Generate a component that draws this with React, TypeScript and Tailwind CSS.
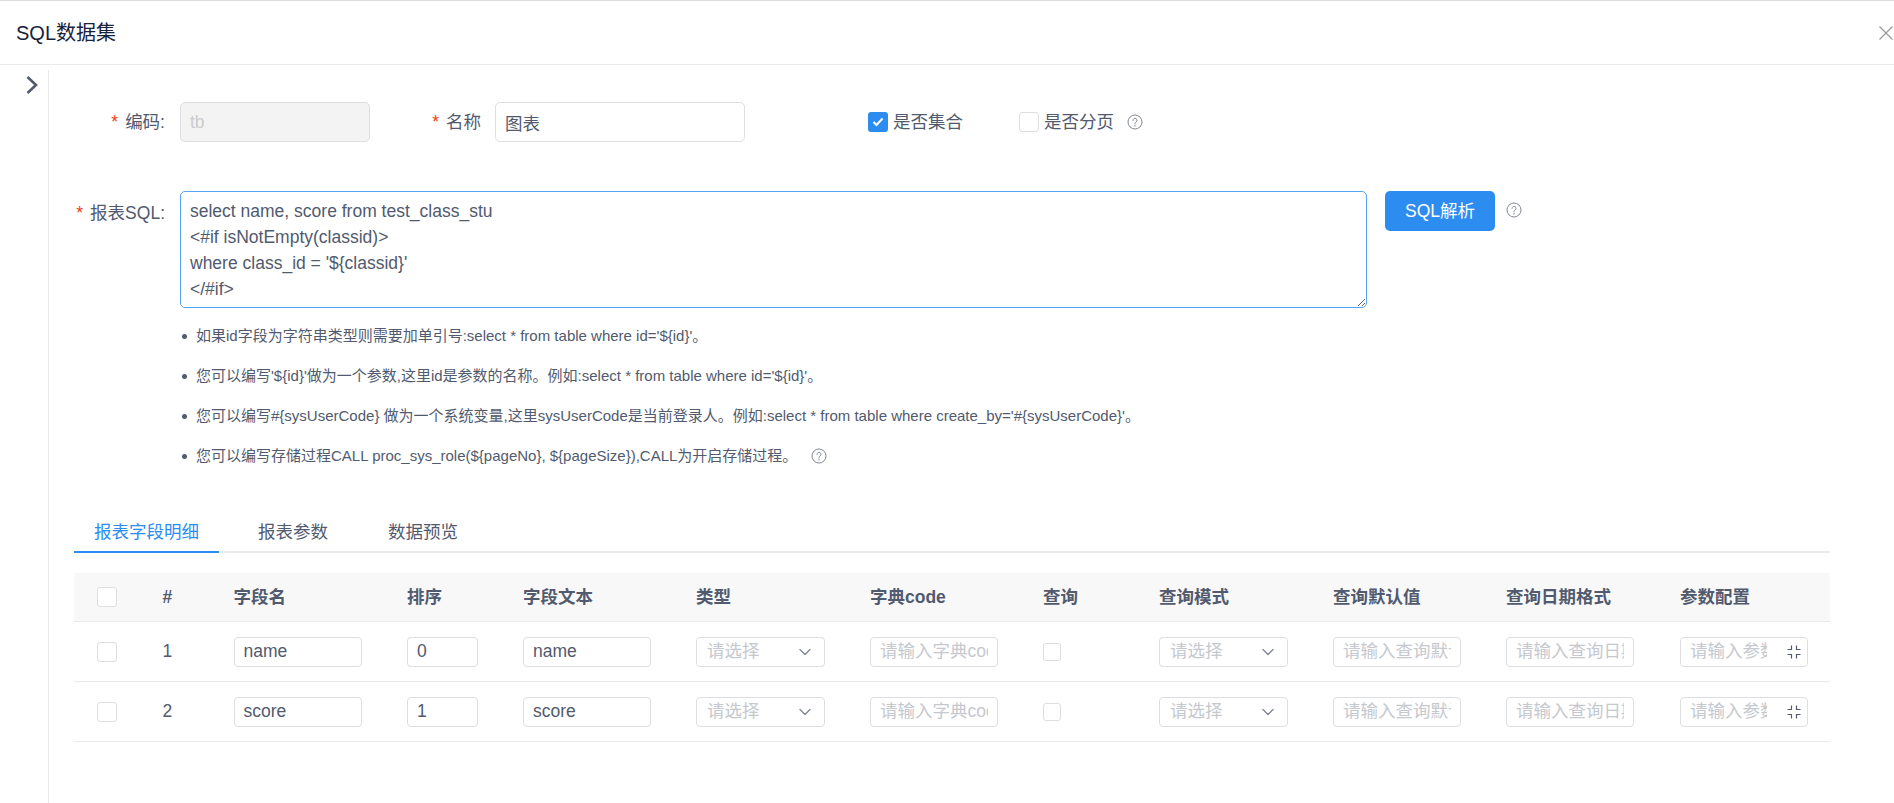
import React from 'react';
import { ChevronDown } from 'lucide-react';

const GRID =
  'grid grid-cols-[88.5px_71px_173.5px_116px_173px_174px_173px_116px_174px_173px_174px_1fr] items-center';

const HEADERS = ['#', '字段名', '排序', '字段文本', '类型', '字典code', '查询', '查询模式', '查询默认值', '查询日期格式', '参数配置'];

const ROWS = [
  { no: 1, name: 'name', order: '0' },
  { no: 2, name: 'score', order: '1' },
];

const NOTES = [
  "如果id字段为字符串类型则需要加单引号:select * from table where id='${id}'。",
  "您可以编写'${id}'做为一个参数,这里id是参数的名称。例如:select * from table where id='${id}'。",
  "您可以编写#{sysUserCode} 做为一个系统变量,这里sysUserCode是当前登录人。例如:select * from table where create_by='#{sysUserCode}'。",
  '您可以编写存储过程CALL proc_sys_role(${pageNo}, ${pageSize}),CALL为开启存储过程。',
];

const SQL = `select name, score from test_class_stu
<#if isNotEmpty(classid)>
where class_id = '\${classid}'
</#if>`;

const cellInput =
  'h-[30px] rounded-[4px] border border-[#dcdee2] bg-white px-[9px] text-[17.5px] text-[#515a6e] outline-none placeholder:text-[#c5c8ce]';

function HelpIcon() {
  return (
    <svg width="16" height="16" viewBox="0 0 16 16" fill="none" stroke="#808695" strokeWidth="1" className="shrink-0">
      <circle cx="8" cy="8" r="7" />
      <path d="M6 6.4a2 2 0 1 1 3.1 1.6c-.7.5-1.1.8-1.1 1.7" strokeLinecap="round" />
      <path d="M8 11.2v.9" strokeLinecap="round" />
    </svg>
  );
}

function CompressIcon() {
  return (
    <svg width="14" height="14" viewBox="0 0 14 14" fill="none" stroke="#515a6e" strokeWidth="1.2">
      <path d="M4.5 0.5v4h-4M9.5 0.5v4h4M4.5 13.5v-4h-4M9.5 13.5v-4h4" />
    </svg>
  );
}

function Box({ size = 'w-5 h-5' }: { size?: string }) {
  return <span className={`${size} block rounded-[3px] border border-[#dcdee2] bg-white`} />;
}

function Required({ children, width }: { children: React.ReactNode; width: string }) {
  return (
    <label className={`${width} flex shrink-0 justify-end text-[17.5px] leading-[26px] text-[#515a6e]`}>
      <span className="mr-[7px] text-[#ed4014]">*</span>
      {children}
    </label>
  );
}

function SelectBox() {
  return (
    <div className="flex h-[30px] w-[129px] items-center justify-between rounded-[4px] border border-[#dcdee2] bg-white pl-[10px] pr-[9px]">
      <span className="text-[17.5px] text-[#c5c8ce]">请选择</span>
      <ChevronDown size={20} color="#808695" strokeWidth={1.6} />
    </div>
  );
}

export default function App() {
  return (
    <div className="flex h-[803px] flex-col overflow-hidden border-t border-[#dddddd] bg-white font-[family-name:'Liberation_Sans','Noto_Sans_CJK_SC',sans-serif]">
      <header className="flex h-[64px] shrink-0 items-center justify-between border-b border-[#e8eaec] pl-4 pr-px">
        <h1 className="text-[20px] leading-none text-[#17233d]">SQL数据集</h1>
        <svg width="14" height="14" viewBox="0 0 14 14" stroke="#999999" strokeWidth="1.2">
          <path d="M0.5 0.5l13 13M13.5 0.5l-13 13" />
        </svg>
      </header>

      <div className="flex flex-1 pt-[5px]">
        <aside className="w-[49px] shrink-0 border-r border-[#e8eaec] pl-[25px] pt-[5px]">
          <svg width="13" height="20" viewBox="0 0 13 20" fill="none" stroke="#515a6e" strokeWidth="2.6">
            <path d="M2.5 2l8.5 8-8.5 8" />
          </svg>
        </aside>

        <main className="min-w-0 flex-1 pt-[32px]">
          <div className="flex h-10 items-center">
            <Required width="w-[116px]">编码:</Required>
            <input
              disabled
              defaultValue="tb"
              className="ml-[15px] h-10 w-[190px] rounded-[5px] border border-[#dcdee2] bg-[#f3f3f3] px-[9px] text-[17.5px] text-[#cccccc] outline-none"
            />
            <div className="ml-[61px]">
              <Required width="w-[50px]">名称</Required>
            </div>
            <input
              readOnly
              defaultValue="图表"
              className="ml-[14px] h-10 w-[250px] rounded-[5px] border border-[#dcdee2] bg-white px-[9px] text-[17.5px] text-[#515a6e] outline-none"
            />
            <div className="ml-[123px] flex items-center">
              <span className="flex h-5 w-5 items-center justify-center rounded-[3px] bg-[#2d8cf0]">
                <svg width="12" height="10" viewBox="0 0 12 10" fill="none" stroke="white" strokeWidth="2">
                  <path d="M1.5 5l3 3 6-6.5" />
                </svg>
              </span>
              <span className="ml-[5px] text-[17.5px] text-[#515a6e]">是否集合</span>
            </div>
            <div className="ml-[56px] flex items-center">
              <Box />
              <span className="ml-[5px] text-[17.5px] text-[#515a6e]">是否分页</span>
              <span className="ml-[13px]">
                <HelpIcon />
              </span>
            </div>
          </div>

          <div className="mt-[49px] flex items-start">
            <div className="pt-[9px]">
              <Required width="w-[116px]">报表SQL:</Required>
            </div>
            <textarea
              readOnly
              defaultValue={SQL}
              className="ml-[15px] h-[117px] w-[1187px] resize-y rounded-[5px] border border-[#57a3f3] px-[9px] pt-[6px] text-[17.5px] leading-[26px] text-[#515a6e] outline-none"
            />
            <button
              type="button"
              className="ml-[18px] h-10 w-[110px] rounded-[5px] bg-[#2d8cf0] text-[17.5px] text-white"
            >
              SQL解析
            </button>
            <span className="ml-[11px] mt-[11px]">
              <HelpIcon />
            </span>
          </div>

          <ul className="mt-[8px] pl-[133px]">
            {NOTES.map((note, i) => (
              <li key={i} className="flex h-10 items-center text-[15px] text-[#515a6e]">
                <span className="mr-[9px] h-[5px] w-[5px] rounded-full bg-[#515a6e]" />
                {note}
                {i === 3 && (
                  <span className="ml-[14px]">
                    <HelpIcon />
                  </span>
                )}
              </li>
            ))}
          </ul>

          <div className="ml-[25px] mr-[64px] mt-[35px] flex h-[42px] border-b-2 border-[#e8eaec] text-[17.5px] text-[#515a6e]">
            <div className="-mb-[2px] mr-[19px] border-b-2 border-[#2d8cf0] px-5 pt-[8px] text-[#2d8cf0]">报表字段明细</div>
            <div className="mr-[20px] px-5 pt-[8px]">报表参数</div>
            <div className="px-5 pt-[8px]">数据预览</div>
          </div>

          <div className="ml-[25px] mr-[64px] mt-5">
            <div className={`${GRID} h-[49px] border-b border-[#e8eaec] bg-[#f8f8f9]`}>
              <div className="pl-[23px]">
                <Box />
              </div>
              {HEADERS.map((h) => (
                <div key={h} className="text-[17.5px] font-bold text-[#515a6e]">
                  {h}
                </div>
              ))}
            </div>
            {ROWS.map((row) => (
              <div key={row.no} className={`${GRID} h-[60px] border-b border-[#e8eaec]`}>
                <div className="pl-[23px]">
                  <Box />
                </div>
                <div className="text-[17.5px] text-[#515a6e]">{row.no}</div>
                <input readOnly defaultValue={row.name} className={`${cellInput} w-[128px]`} />
                <input readOnly defaultValue={row.order} className={`${cellInput} w-[71px]`} />
                <input readOnly defaultValue={row.name} className={`${cellInput} w-[128px]`} />
                <SelectBox />
                <input readOnly placeholder="请输入字典code" className={`${cellInput} w-[128px]`} />
                <Box size="w-[18px] h-[18px]" />
                <SelectBox />
                <input readOnly placeholder="请输入查询默认值" className={`${cellInput} w-[128px]`} />
                <input readOnly placeholder="请输入查询日期格式" className={`${cellInput} w-[128px]`} />
                <div className="relative w-[128px]">
                  <input readOnly placeholder="请输入参数配置" className={`${cellInput} w-full pr-[40px]`} />
                  <span className="absolute right-[7px] top-2">
                    <CompressIcon />
                  </span>
                </div>
              </div>
            ))}
          </div>
        </main>
      </div>
    </div>
  );
}
